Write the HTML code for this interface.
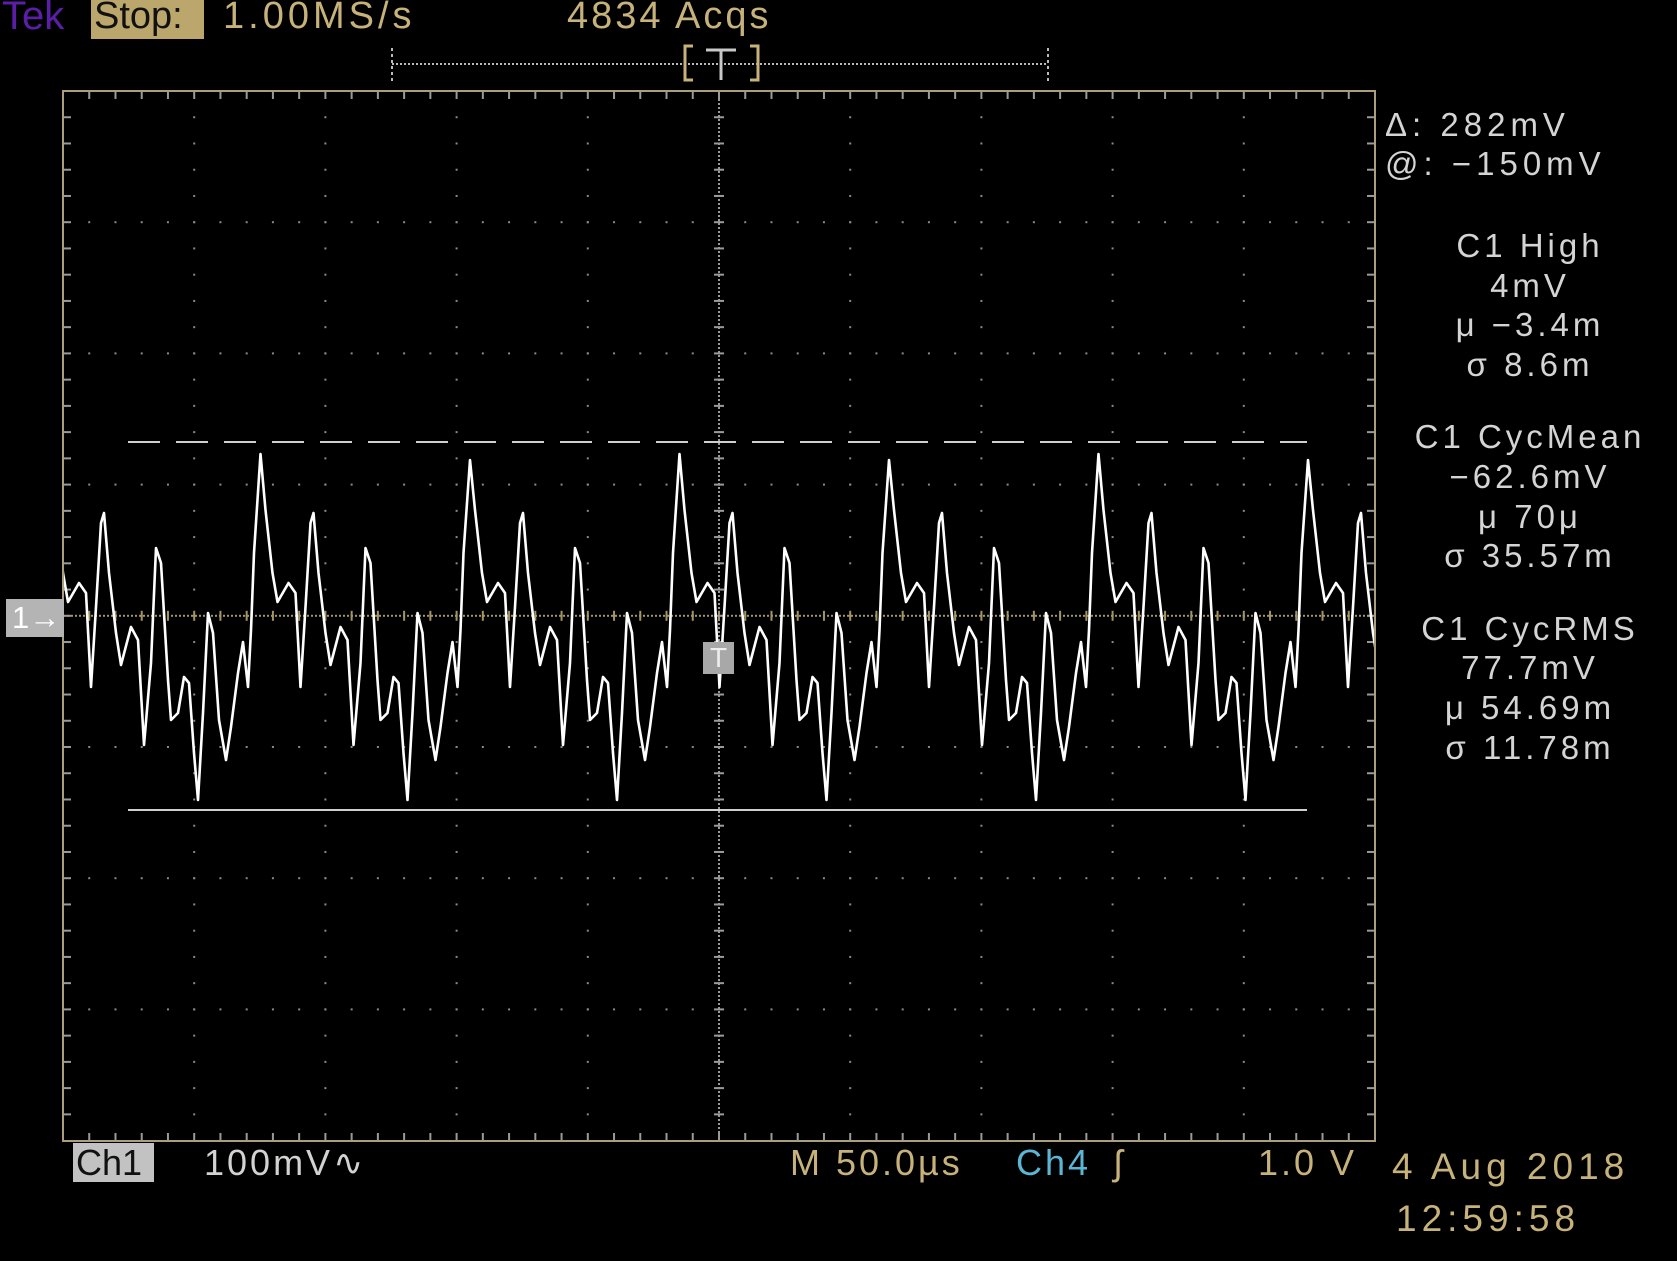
<!DOCTYPE html>
<html><head><meta charset="utf-8"><style>
html,body{margin:0;padding:0;background:#000;width:1677px;height:1261px;overflow:hidden}
body{position:relative;font-family:"Liberation Sans","DejaVu Sans",sans-serif}
.t{position:absolute;white-space:nowrap;line-height:1}
.tan{color:#c6b27a}
.gr{color:#d2d2d2}
.rp{position:absolute;left:1380px;width:300px;text-align:center;font-size:33px;color:#d4d4d4;line-height:1;letter-spacing:4px}
</style></head><body>
<svg id="s" width="1677" height="1261" style="position:absolute;left:0;top:0">
<defs><clipPath id="c"><rect x="64" y="92" width="1310" height="1048"/></clipPath></defs>
<g id="g"></g>
<rect x="63" y="91" width="1312" height="1050" fill="none" stroke="#a99f80" stroke-width="2"/>
<line x1="128" y1="442" x2="1307" y2="442" stroke="#cfcfcf" stroke-width="2" stroke-dasharray="32,16"/>
<line x1="128" y1="810" x2="1307" y2="810" stroke="#cfcfcf" stroke-width="2"/>
<polyline id="w" clip-path="url(#c)" fill="none" stroke="#fff" stroke-width="2.6" stroke-linejoin="round"/>
<line x1="392" y1="64" x2="1048" y2="64" stroke="#bbb" stroke-width="2" stroke-dasharray="2,2"/>
<line x1="392" y1="48" x2="392" y2="82" stroke="#bbb" stroke-width="2" stroke-dasharray="3,3"/>
<line x1="1048" y1="48" x2="1048" y2="82" stroke="#bbb" stroke-width="2" stroke-dasharray="3,3"/>
<path d="M693 46 h-8 v34 h8 M750 46 h8 v34 h-8" fill="none" stroke="#c6b27a" stroke-width="3"/>
<path d="M706 50 h30 M721 50 v30" stroke="#c8c8c8" stroke-width="3"/>
</svg>
<div class="t" style="left:2px;top:-4px;font-size:40px;color:#5a1fa6">Tek</div>
<div class="t" style="left:91px;top:0;width:113px;height:39px;background:#bba66c"></div>
<div class="t" style="left:94px;top:-3px;font-size:38px;color:#111">Stop:</div>
<div class="t tan" style="left:223px;top:-3px;font-size:38px;letter-spacing:4px">1.00MS/s</div>
<div class="t tan" style="left:567px;top:-3px;font-size:38px;letter-spacing:3px">4834 Acqs</div>

<div class="t" style="left:6px;top:599px;width:58px;height:38px;background:#b4b4b4"></div>
<div class="t" style="left:12px;top:602px;font-size:31px;color:#fff">1→</div>
<div class="t" style="left:703px;top:642px;width:31px;height:32px;background:#a8a8a8"></div>
<div class="t" style="left:710px;top:644px;font-size:28px;color:#eee">T</div>

<div class="rp" style="left:1385px;width:auto;text-align:left;top:108px;letter-spacing:5px">Δ: 282mV</div>
<div class="rp" style="left:1385px;width:auto;text-align:left;top:147px;letter-spacing:5px">@: −150mV</div>
<div class="rp" style="top:229px">C1 High</div>
<div class="rp" style="top:269px">4mV</div>
<div class="rp" style="top:308px">μ −3.4m</div>
<div class="rp" style="top:348px">σ 8.6m</div>
<div class="rp" style="top:420px">C1 CycMean</div>
<div class="rp" style="top:460px">−62.6mV</div>
<div class="rp" style="top:500px">μ 70μ</div>
<div class="rp" style="top:539px">σ 35.57m</div>
<div class="rp" style="top:612px">C1 CycRMS</div>
<div class="rp" style="top:651px">77.7mV</div>
<div class="rp" style="top:691px">μ 54.69m</div>
<div class="rp" style="top:731px">σ 11.78m</div>

<div class="t" style="left:73px;top:1143px;width:81px;height:39px;background:#c2c2c2"></div>
<div class="t" style="left:76px;top:1145px;font-size:36px;color:#111">Ch1</div>
<div class="t gr" style="left:204px;top:1145px;font-size:36px;letter-spacing:3px">100mV∿</div>
<div class="t tan" style="left:790px;top:1145px;font-size:36px;letter-spacing:3px">M 50.0µs</div>
<div class="t" style="left:1016px;top:1145px;font-size:36px;color:#5ab6d4;letter-spacing:3px">Ch4</div>
<div class="t tan" style="left:1114px;top:1145px;font-size:36px">ʃ</div>
<div class="t tan" style="left:1258px;top:1145px;font-size:36px;letter-spacing:3px">1.0 V</div>
<div class="t tan" style="left:1392px;top:1148px;font-size:37px;letter-spacing:5px">4 Aug 2018</div>
<div class="t tan" style="left:1396px;top:1200px;font-size:37px;letter-spacing:5px">12:59:58</div>
<script>
var NS="http://www.w3.org/2000/svg",g=document.getElementById("g");
function r(x,y,w,h,c){var e=document.createElementNS(NS,"rect");e.setAttribute("x",x);e.setAttribute("y",y);e.setAttribute("width",w);e.setAttribute("height",h);e.setAttribute("fill",c);g.appendChild(e);}
var L=63,T=91,D=131.2,m=D/5;
for(var i=1;i<10;i++){var x=L+D*i;for(var k=1;k<40;k++){r(x-1,T+m*k-1,2,2,"#8a8a8a");}}
for(var j=1;j<8;j++){var y=T+D*j;for(var k=1;k<50;k++){r(L+m*k-1,y-1,2,2,"#8a8a8a");}}
var cx=L+5*D,cy=T+4*D;
for(var y=T;y<T+1050;y+=4)r(cx-1,y,2,2,"#9a9a9a");
for(var x=L;x<L+1312;x+=4)r(x,cy-1,2,2,"#a39463");
for(var k=1;k<50;k++){r(L+m*k-1,cy-5,2,10,"#a39463");r(L+m*k-1,T+1,2,7,"#9a9a9a");r(L+m*k-1,T+1050-8,2,7,"#9a9a9a");}
for(var k=1;k<40;k++){r(cx-5,T+m*k-1,10,2,"#9a9a9a");r(L+1,T+m*k-1,7,2,"#9a9a9a");r(L+1312-8,T+m*k-1,7,2,"#9a9a9a");}
var P=[[0,460],[5,510],[12,573],[17,602],[28,583],[35,593],[40,687],[45,607],[50,523],[53,513],[58,573],[65,633],[70,665],[80,627],[87,640],[93,745],[100,663],[105,548],[110,563],[117,680],[120,720],[127,713],[133,677],[138,683],[143,753],[147,800],[152,713],[157,613],[162,633],[168,720],[175,760],[180,727],[187,673],[192,642],[197,687],[200,630],[203,553]];
var pts=[],per=209.5;
for(var n=-2;n<6;n++){var x0=470+n*per;P.forEach(function(p){pts.push((x0+p[0]).toFixed(1)+","+(p[1]+(n%2?-6:0)*(p[0]==0?1:0)))});}
document.getElementById("w").setAttribute("points",pts.join(" "));
</script>
</body></html>
